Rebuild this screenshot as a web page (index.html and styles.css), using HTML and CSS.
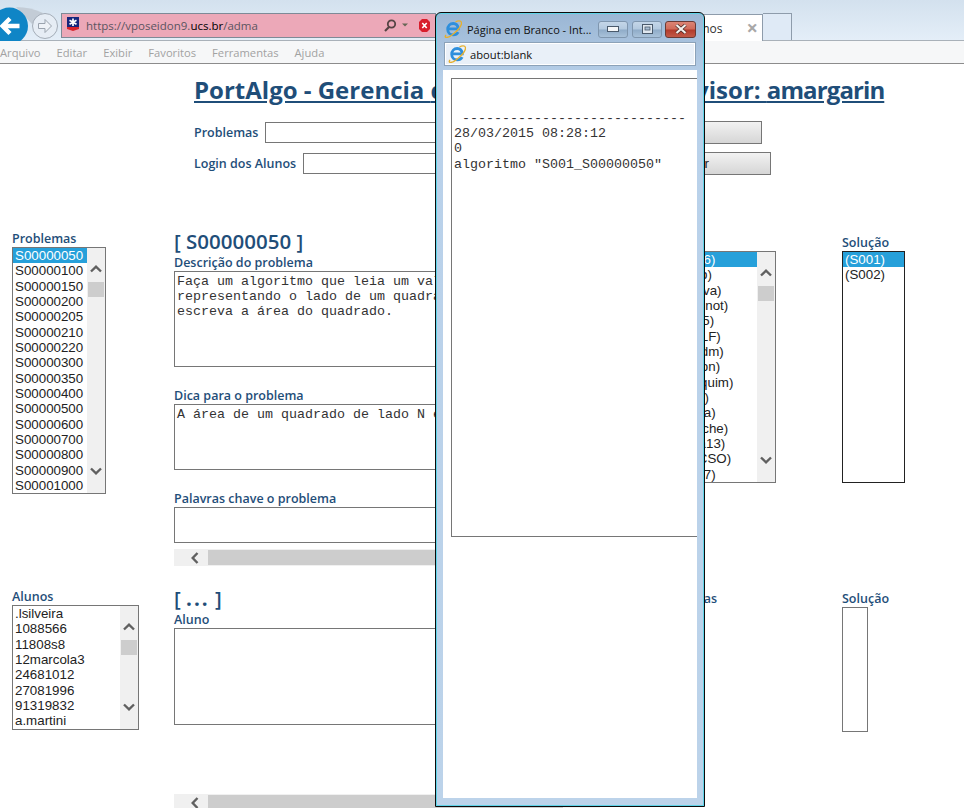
FILE: index.html
```html
<!DOCTYPE html>
<html lang="pt-BR">
<head>
<meta charset="utf-8">
<title>PortAlgo</title>
<link rel="stylesheet" href="styles.css">
</head>
<body>
<svg class="defs" width="0" height="0" aria-hidden="true">
  <defs>
    <symbol id="up" viewBox="0 0 12 8"><path d="M1 6.5 6 1.7 11 6.5" fill="none" stroke="#606060" stroke-width="2.4"/></symbol>
    <symbol id="down" viewBox="0 0 12 8"><path d="M1 1.5 6 6.3 11 1.5" fill="none" stroke="#606060" stroke-width="2.4"/></symbol>
    <symbol id="left" viewBox="0 0 8 12"><path d="M6.5 1 1.7 6 6.5 11" fill="none" stroke="#606060" stroke-width="2.4"/></symbol>
    <symbol id="ie" viewBox="0 0 18 18">
      <path d="M4 8.800h10.200C14 5.600 12 3.500 9.200 3.500 6 3.500 3.700 6 3.700 9.300c0 3.300 2.300 5.600 5.500 5.600 2.300 0 4-1 5-2.800" fill="none" stroke="#2e8fdc" stroke-width="2.800"/>
      <path d="M2 15C-.5 18 3.500 18.500 8 15 12.500 11.500 18 6 17.500 2.500 17 .5 14 .5 11.500 2" fill="none" stroke="#e6b02e" stroke-width="1.300"/>
    </symbol>
  </defs>
</svg>

<header class="chrome">
  <div class="toolbar">
    <svg class="nav" width="61" height="41" viewBox="0 0 61 41">
      <path d="M16 7C26 7 35 9 43 13L32 24Z" fill="#c3ccd6"/>
      <circle cx="9.500" cy="26" r="18.500" fill="#0f85c6"/>
      <path d="M19.500 26H3M10 18.500 2.500 26l7.500 7.500" fill="none" stroke="#fff" stroke-width="4.400"/>
      <circle cx="45" cy="26" r="12.500" fill="#e6edf5" stroke="#a4adb8"/>
      <path d="M38.500 23.500h6.500v-4l6.500 6.500-6.500 6.500v-4h-6.500z" fill="#eef2f7" stroke="#9aa3ae"/>
    </svg>
    <div class="address">
      <svg class="favicon" width="12" height="14" viewBox="0 0 12 14">
        <rect width="12" height="10" fill="#16267c"/>
        <path d="M0 10h12v2L6 14 0 12z" fill="#d8242c"/>
        <path d="M6 1.500v7.500M2.500 3.200l7 4M9.500 3.200l-7 4" stroke="#fff" stroke-width="1.700"/>
      </svg>
      <span class="url">https://vposeidon9.<b class="host">ucs.br</b>/adma</span>
      <svg class="search" width="24" height="13" viewBox="0 0 24 13">
        <circle cx="7.500" cy="5" r="3.700" fill="none" stroke="#544" stroke-width="1.800"/>
        <path d="M5 8 1 12" stroke="#544" stroke-width="2.200"/>
        <path d="M18 4.500h6l-3 3z" fill="#665"/>
      </svg>
      <svg class="cert" width="11" height="13" viewBox="0 0 11 13">
        <path d="M3 0h5l3 3v7l-3 3H3l-3-3V3z" fill="#d81e2c"/>
        <path d="M3.300 4 7.700 9M7.700 4 3.300 9" stroke="#fff" stroke-width="1.600"/>
      </svg>
    </div>
    <div class="tab"><span class="tab-title">Gerencia de Algoritmos</span><span class="tab-close">×</span></div>
    <div class="tab-new"></div>
  </div>
  <nav class="menu">
    <span>Arquivo</span><span>Editar</span><span>Exibir</span><span>Favoritos</span><span>Ferramentas</span><span>Ajuda</span>
  </nav>
</header>

<main class="page">
  <h1 class="title">PortAlgo - Gerencia <span class="t-mid">de Problemas - Super</span>visor: <span class="t-name">amargarin</span></h1>

  <form class="filters">
    <div class="filter">
      <label class="lbl">Problemas</label>
      <div class="field f1"></div>
      <div class="btn b1">Listar</div>
    </div>
    <div class="filter">
      <label class="lbl">Login dos Alunos</label>
      <div class="field f2"></div>
      <div class="btn b2">Buscar</div>
    </div>
  </form>

  <section class="panel panel-top">
    <div class="col-list">
      <div class="lbl">Problemas</div>
      <div class="list l-prob">
        <div class="items">
          <div class="item sel">S00000050</div>
          <div class="item">S00000100</div>
          <div class="item">S00000150</div>
          <div class="item">S00000200</div>
          <div class="item">S00000205</div>
          <div class="item">S00000210</div>
          <div class="item">S00000220</div>
          <div class="item">S00000300</div>
          <div class="item">S00000350</div>
          <div class="item">S00000400</div>
          <div class="item">S00000500</div>
          <div class="item">S00000600</div>
          <div class="item">S00000700</div>
          <div class="item">S00000800</div>
          <div class="item">S00000900</div>
          <div class="item">S00001000</div>
        </div>
        <div class="vbar">
          <div class="vtop"><svg class="chev"><use href="#up"/></svg></div>
          <div class="vthumb"></div>
          <div class="vbot"><svg class="chev"><use href="#down"/></svg></div>
        </div>
      </div>
    </div>

    <div class="col-main">
      <h2 class="head">[ S00000050 ]</h2>
      <div class="lbl">Descrição do problema</div>
      <div class="box h-desc">Faça um algoritmo que leia um valor
representando o lado de um quadrado e
escreva a área do quadrado.</div>
      <div class="lbl gap">Dica para o problema</div>
      <div class="box h-dica">A área de um quadrado de lado N é N*N</div>
      <div class="lbl gap">Palavras chave o problema</div>
      <div class="box h-key"></div>
      <div class="hbar"><svg class="hchev"><use href="#left"/></svg><div class="hthumb"></div></div>
    </div>

    <div class="col-sub">
      <div class="lbl">Alunos</div>
      <div class="list l-sub">
        <div class="items">
          <div class="item sel">S00000050 (jo116)</div>
          <div class="item">S00000050 (ssab)</div>
          <div class="item">S00000050 (msilva)</div>
          <div class="item">S00000050 (marinot)</div>
          <div class="item">S00000050 (rafa5)</div>
          <div class="item">S00000050 (MOLF)</div>
          <div class="item">S00000050 (ncadm)</div>
          <div class="item">S00000050 (dalton)</div>
          <div class="item">S00000050 (ljoaquim)</div>
          <div class="item">S00000050 (iana)</div>
          <div class="item">S00000050 (sonia)</div>
          <div class="item">S00000050 (marche)</div>
          <div class="item">S00000050 (rena13)</div>
          <div class="item">S00000050 (ANCSO)</div>
          <div class="item">S00000050 (ivo17)</div>
        </div>
        <div class="vbar">
          <div class="vtop"><svg class="chev"><use href="#up"/></svg></div>
          <div class="vthumb"></div>
          <div class="vbot"><svg class="chev"><use href="#down"/></svg></div>
        </div>
      </div>
    </div>

    <div class="col-sol">
      <div class="lbl">Solução</div>
      <div class="list l-sol">
        <div class="items">
          <div class="item sel">(S001)</div>
          <div class="item">(S002)</div>
        </div>
      </div>
    </div>
  </section>

  <section class="panel panel-bottom">
    <div class="col-list c2">
      <div class="lbl">Alunos</div>
      <div class="list l-alu">
        <div class="items">
          <div class="item">.lsilveira</div>
          <div class="item">1088566</div>
          <div class="item">11808s8</div>
          <div class="item">12marcola3</div>
          <div class="item">24681012</div>
          <div class="item">27081996</div>
          <div class="item">91319832</div>
          <div class="item">a.martini</div>
        </div>
        <div class="vbar">
          <div class="vtop"><svg class="chev"><use href="#up"/></svg></div>
          <div class="vthumb"></div>
          <div class="vbot"><svg class="chev"><use href="#down"/></svg></div>
        </div>
      </div>
    </div>

    <div class="col-main">
      <h2 class="head">[ <span class="dots">...</span> ]</h2>
      <div class="lbl">Aluno</div>
      <div class="box h-alu"></div>
      <div class="hbar hbar-low"><svg class="hchev"><use href="#left"/></svg><div class="hthumb"></div></div>
    </div>

    <div class="col-sub c2">
      <div class="lbl lbl-sub">Soluções enviadas</div>
    </div>

    <div class="col-sol c2">
      <div class="lbl">Solução</div>
      <div class="list l-sol2"></div>
    </div>
  </section>
</main>

<aside class="popup">
  <div class="popup-title">
    <svg class="ie-big"><use href="#ie"/></svg>
    <span class="popup-name">Página em Branco - Int...</span>
    <div class="wbtn"><svg width="12" height="6" viewBox="0 0 12 6"><rect x=".5" y=".5" width="11" height="5" fill="#f4f6f8" stroke="#4a5a6c"/></svg></div>
    <div class="wbtn"><svg width="11" height="10" viewBox="0 0 11 10"><rect x=".5" y=".5" width="10" height="9" fill="#dfe7ef" stroke="#4a5a6c"/><rect x="3" y="3" width="5" height="3" fill="#a9bdd3" stroke="#4a5a6c" stroke-width=".8"/></svg></div>
    <div class="wbtn wclose"><svg width="14" height="10" viewBox="0 0 14 10"><path d="M2.500 1 11.500 9M11.500 1 2.500 9" stroke="#4a2a26" stroke-width="3.600"/><path d="M2.500 1 11.500 9M11.500 1 2.500 9" stroke="#f4f2ee" stroke-width="2.200"/></svg></div>
  </div>
  <div class="popup-addr">
    <svg class="ie-big"><use href="#ie"/></svg>
    <span>about:blank</span>
  </div>
  <div class="popup-body">
    <pre class="console">


 ----------------------------
28/03/2015 08:28:12
0
algoritmo "S001_S00000050"</pre>
  </div>
</aside>
</body>
</html>
```

FILE: styles.css
```css
* { box-sizing: border-box; }
html, body { margin: 0; padding: 0; height: 808px; overflow: hidden; background: #fff; }
body { font-family: "Open Sans", "Liberation Sans", sans-serif; position: relative; }
.defs { position: absolute; }

/* browser chrome */
.chrome { height: 64px; }
.toolbar {
  height: 41px; display: flex; align-items: flex-end;
  background: linear-gradient(#d3e1ee, #e4eef8);
  border-bottom: 1px solid #a9b1b9;
}
.nav { flex: none; margin-bottom: -1px; }
.address {
  width: 375px; height: 25px; margin-bottom: 2px; flex: none;
  display: flex; align-items: center; padding: 0 5px 0 5px;
  background: #eca8b8; border: 1px solid #7e8a97;
}
.favicon { flex: none; margin-right: 7px; margin-top: -3px; }
.url { flex: 1; font-size: 11.5px; color: #5b5560; white-space: nowrap; }
.host { font-weight: 400; color: #000; }
.search { flex: none; margin-right: 11px; }
.cert { flex: none; }
.tab {
  width: 327px; height: 27px; flex: none; margin-bottom: -1px;
  display: flex; align-items: center; justify-content: flex-end; gap: 24px;
  padding-right: 4px; background: #fff;
  border: 1px solid #8e9cab; border-bottom: 0;
  font-size: 12px; color: #333;
}
.tab-title { white-space: nowrap; }
.tab-close { font-size: 20px; line-height: 20px; font-weight: 700; color: #a8a8a8; }
.tab-new {
  width: 29px; height: 27px; flex: none;
  background: #dfeaf6; border: 1px solid #8e9cab; border-left: 0; border-bottom: 0;
}
.menu {
  height: 23px; display: flex; align-items: center; gap: 16px;
  background: #f6f7f8; border-bottom: 1px solid #8c8c8c;
  font-size: 11.2px; color: #a2a2a2;
}

/* page */
.page { color: #1f4e79; }
.title {
  margin: 11px 0 0 194px; height: 30px; width: 690px; white-space: nowrap;
  font-size: 24px; line-height: 30px; font-weight: 700; text-decoration: underline;
  color: #1f4e79;
}
.t-mid { letter-spacing: .6px; }
.t-name { letter-spacing: -.9px; }
.filters { margin: 16px 0 0 194px; display: flex; flex-direction: column; gap: 8px; }
.filter { display: flex; align-items: center; height: 23px; }
.lbl { font-size: 12.5px; line-height: 17px; font-weight: 600; color: #1f4e79; white-space: nowrap; }
.lbl-sub { padding-left: 7px; }
.field { height: 21px; background: #fff; border: 1px solid #767676; }
.f1 { margin-left: 7px; width: 340px; }
.f2 { margin-left: 7px; width: 302px; }
.btn {
  height: 23px; flex: none;
  background: linear-gradient(#f2f2f2, #d6d6d6); border: 1px solid #767676;
  font: 13.33px/21px "Liberation Sans", sans-serif; color: #222; text-align: center;
}
.b1 { width: 157px; }
.b2 { width: 166px; }

.panel { display: grid; grid-template-columns: 162px 426px 242px 1fr; padding-left: 12px; align-items: start; }
.panel-top { margin-top: 55px; }
.panel-bottom { margin-top: 21px; }
.col-sub, .col-sol { padding-top: 4px; }
.col-sub.c2, .col-sol.c2 { padding-top: 3px; }
.col-list.c2 { padding-top: 1px; }
.head { margin: 0 0 1px; font-size: 20.5px; line-height: 23px; font-weight: 600; color: #1f4e79; white-space: nowrap; }
.dots { letter-spacing: 2px; font-weight: 700; }
.gap { margin-top: 20px; }

.box {
  width: 490px; background: #fff; border: 1px solid #767676; padding: 2px;
  font: 13.33px/15px "Liberation Mono", monospace; color: #333; white-space: pre-wrap;
}
.h-desc { height: 96px; }
.h-dica { height: 66px; }
.h-key { height: 36px; }
.h-alu { height: 97px; }

.hbar {
  width: 426px; height: 17px; margin-top: 6px; background: #f0f0f0;
  display: flex; align-items: center; padding-left: 17px;
}
.hbar-low { margin-top: 69px; }
.hchev { width: 8px; height: 12px; flex: none; }
.hthumb { width: 355px; height: 15px; margin-left: 9px; background: #cdcdcd; }

.list { display: flex; background: #fff; border: 1px solid #767676; overflow: hidden; }
.items { flex: 1; min-width: 0; font: 13.33px/15.33px "Liberation Sans", sans-serif; color: #222; }
.item { height: 15.33px; padding-left: 2px; white-space: nowrap; }
.item.sel { background: #26a0da; color: #fff; }
.vbar { width: 18px; flex: none; background: #f0f0f0; display: flex; flex-direction: column; padding-right: 1px; }
.vtop, .vbot { height: 34px; display: flex; justify-content: center; }
.vtop { padding-top: 17px; }
.vbot { margin-top: auto; padding-top: 8px; }
.vthumb { height: 15px; background: #cdcdcd; margin-left: 1px; }
.chev { width: 12px; height: 8px; }

.l-prob { width: 94px; height: 247px; }
.l-alu { width: 127px; height: 125px; }
.l-sub { width: 176px; height: 232px; }
.l-sol { width: 63px; height: 232px; border-color: #222; }
.l-sol2 { width: 26px; height: 125px; }

/* popup window */
.popup {
  position: absolute; left: 435px; top: 12px; width: 270px; height: 795px;
  display: flex; flex-direction: column;
  padding: 0 7px 8px 7px;
  background: linear-gradient(#9ab6d4 0, #b9d1ea 70px, #bcd3ea 100%);
  border: 1px solid #0b0b0b; border-radius: 6px 6px 0 0;
  box-shadow: inset 0 0 0 1px #5fd3e8;
  color: #111;
}
.popup-title { height: 29px; flex: none; display: flex; align-items: center; gap: 4px; padding: 3px 0 0 1px; margin-right: 1px; }
.ie-big { width: 18px; height: 18px; flex: none; }
.popup-name { font-size: 11px; flex: 1; white-space: nowrap; margin-left: 1px; }
.wbtn {
  width: 30px; height: 17px; flex: none; display: flex; align-items: center; justify-content: center;
  border: 1px solid #7f96ae; border-radius: 3px;
  background: linear-gradient(#c4d6e8 0, #b3c9df 48%, #8fabc8 52%, #a9c2da 100%);
}
.wclose { width: 31px; border-color: #6a3a34; background: linear-gradient(#dc8474 0, #cf6a58 48%, #b23a2a 52%, #c25a48 100%); margin-left: -1px; }
.popup-addr {
  height: 24px; flex: none; margin: 0 0 4px 1px; display: flex; align-items: center; gap: 4px; padding-left: 3px;
  width: 252px;
  background: #e9f0f8; border: 1px solid #8ca2b8; box-shadow: inset 0 0 0 1px #fff;
  font-size: 11.2px;
}
.popup-body { flex: 1; background: #fff; padding: 8px 0 0 8px; }
.console {
  margin: 0; height: 459px; padding: 1px 0 0 2px;
  border: 1px solid #767676; border-right: 0; overflow: hidden;
  font: 13.33px/15.33px "Liberation Mono", monospace; color: #333;
}
```
